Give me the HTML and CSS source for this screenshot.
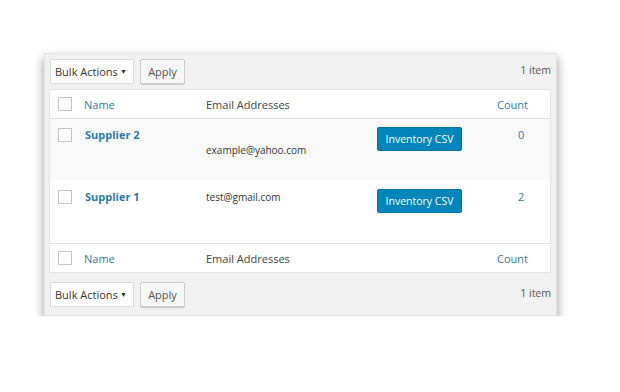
FILE: index.html
```html
<!DOCTYPE html>
<html lang="en">
<head>
    <meta charset="UTF-8">
    <title>Suppliers</title>
    <link rel="stylesheet" href="styles.css">
</head>
<body>
    <div class="panel">
        <div class="tablenav top">
            <div class="bulk">
                <div class="select">Bulk Actions <span class="caret">&#9660;</span></div>
                <button class="apply">Apply</button>
            </div>
            <div class="count-items">1 item</div>
        </div>

        <div class="table">
            <div class="row head">
                <div class="cell cb"><span class="checkbox"></span></div>
                <div class="cell link">Name</div>
                <div class="cell">Email Addresses</div>
                <div class="cell"></div>
                <div class="cell link">Count</div>
            </div>
            <div class="row item alt">
                <div class="cell cb"><span class="checkbox"></span></div>
                <div class="cell name">Supplier 2</div>
                <div class="cell email low">example@yahoo.com</div>
                <div class="cell"><button class="csv">Inventory CSV</button></div>
                <div class="cell num">0</div>
            </div>
            <div class="row item tall">
                <div class="cell cb"><span class="checkbox"></span></div>
                <div class="cell name">Supplier 1</div>
                <div class="cell email">test@gmail.com</div>
                <div class="cell"><button class="csv">Inventory CSV</button></div>
                <div class="cell num">2</div>
            </div>
            <div class="row head foot">
                <div class="cell cb"><span class="checkbox"></span></div>
                <div class="cell link">Name</div>
                <div class="cell">Email Addresses</div>
                <div class="cell"></div>
                <div class="cell link">Count</div>
            </div>
        </div>

        <div class="tablenav bottom">
            <div class="bulk">
                <div class="select">Bulk Actions <span class="caret">&#9660;</span></div>
                <button class="apply">Apply</button>
            </div>
            <div class="count-items">1 item</div>
        </div>
    </div>
</body>
</html>
```

FILE: styles.css
```css
body {
    margin: 0;
    padding: 53px 0 0 44px;
    background-color: #ffffff;
    font-family: "Open Sans", sans-serif;
    font-size: 11px;
    color: #444;
}
.panel {
    width: 513px;
    height: 263px;
    box-sizing: border-box;
    padding: 0 5px 0 4px;
    background-color: #f1f1f1;
    border: 1px solid #e4e4e4;
    box-shadow: 0 5px 10px rgba(0,0,0,0.4);
}
.tablenav {
    display: flex;
    justify-content: space-between;
    align-items: center;
}
.tablenav.top {
    height: 35px;
    box-sizing: border-box;
}
.tablenav.bottom {
    height: 44px;
    padding-bottom: 2px;
    box-sizing: border-box;
}
.bulk {
    display: flex;
    gap: 6px;
    padding-left: 1px;
}
.select {
    width: 84px;
    height: 25px;
    box-sizing: border-box;
    padding: 0 6px 0 4px;
    background-color: #fff;
    border: 1px solid #ddd;
    display: flex;
    align-items: center;
    justify-content: space-between;
    white-space: nowrap;
    color: #333;
    font-size: 11px;
}
.caret {
    font-size: 7px;
    color: #333;
}
.apply {
    width: 45px;
    height: 25px;
    padding: 0;
    background-color: #f7f7f7;
    border: 1px solid #ccc;
    border-radius: 2px;
    box-shadow: 0 1px 0 #ccc;
    font-family: inherit;
    font-size: 11px;
    color: #555;
}
.count-items {
    color: #555;
    font-size: 10.5px;
    margin-top: -3px;
}
.table {
    background-color: #fff;
    border: 1px solid #e5e5e5;
}
.row {
    display: grid;
    grid-template-columns: 34px 122px 171px 120px 1fr;
    align-items: start;
}
.row.head {
    height: 28px;
    align-items: center;
    border-bottom: 1px solid #e1e1e1;
    font-size: 11px;
}
.row.foot {
    border-bottom: none;
    border-top: 1px solid #e1e1e1;
}
.row.item {
    height: 61px;
    padding-top: 8px;
    box-sizing: border-box;
}
.row.tall {
    height: 63px;
    padding-top: 9px;
}
.alt {
    background-color: #f9f9f9;
}
.cell.cb {
    padding-left: 8px;
    display: flex;
}
.checkbox {
    width: 14px;
    height: 14px;
    box-sizing: border-box;
    border: 1px solid #c4c4c4;
    background-color: #fff;
}
.row.item .checkbox {
    margin-top: 1px;
}
.link {
    color: #2d7aa8;
}
.name {
    color: #2d7aa8;
    font-weight: bold;
    font-size: 11px;
    padding-left: 1px;
    line-height: 16px;
}
.email {
    font-size: 10px;
    color: #333;
    line-height: 16px;
}
.email.low {
    margin-top: 15px;
}
.csv {
    width: 85px;
    height: 24px;
    padding: 0;
    background-color: #0085ba;
    border: 1px solid #0073aa;
    border-radius: 2px;
    color: #fff;
    font-family: inherit;
    font-size: 10.5px;
}
.num {
    color: #2d7aa8;
    font-size: 11px;
    padding-left: 21px;
    line-height: 16px;
}
```
